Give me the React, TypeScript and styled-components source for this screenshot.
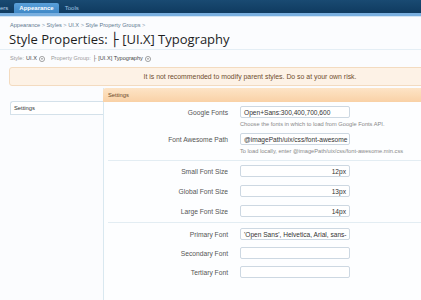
import React from 'react'
import styled, { createGlobalStyle } from 'styled-components'

const GlobalStyle = createGlobalStyle`
	html, body {
		margin: 0;
		padding: 0;
		background: #fbfcfe;
		overflow: hidden;
	}
	body {
		font-family: 'Liberation Sans', Arial, sans-serif;
		color: #333;
	}
`

const DropIcon: React.FC = () => (
	<svg width="6" height="6" viewBox="0 0 10 10" style={{ marginLeft: 2, verticalAlign: '-1px' }}>
		<circle cx="5" cy="5" r="4.3" fill="none" stroke="#777" strokeWidth="1.1" />
		<path d="M3 4 L5 6.4 L7 4 Z" fill="#666" />
	</svg>
)

const groups = [
	{
		rows: [
			{ label: 'Google Fonts', value: 'Open+Sans:300,400,700,600', hint: 'Choose the fonts in which to load from Google Fonts API.' },
			{ label: 'Font Awesome Path', value: '@imagePath/uix/css/font-awesome', hint: 'To load locally, enter @imagePath/uix/css/font-awesome.min.css' },
		],
	},
	{
		rows: [
			{ label: 'Small Font Size', value: '12px', right: true },
			{ label: 'Global Font Size', value: '13px', right: true },
			{ label: 'Large Font Size', value: '14px', right: true },
		],
	},
	{
		rows: [
			{ label: 'Primary Font', value: "'Open Sans', Helvetica, Arial, sans-" },
			{ label: 'Secondary Font', value: '' },
			{ label: 'Tertiary Font', value: '' },
		],
	},
]

export default function App() {
	return (
		<Page>
			<GlobalStyle />
			<TopBar>
				<Tab>ers</Tab>
				<Tab $active>Appearance</Tab>
				<Tab>Tools</Tab>
			</TopBar>
			<SubStrip />

			<TitleBar>
				<Breadcrumb>
					Appearance <Crumb>&gt;</Crumb> Styles <Crumb>&gt;</Crumb> UI.X <Crumb>&gt;</Crumb> Style Property Groups <Crumb>&gt;</Crumb>
				</Breadcrumb>
				<Title>Style Properties: ├ [UI.X] Typography</Title>
			</TitleBar>

			<Body>
				<Chooser>
					<ChooserLabel>Style:</ChooserLabel> <ChooserValue>UI.X</ChooserValue>
					<DropIcon />
					<Spacer />
					<ChooserLabel>Property Group:</ChooserLabel> <ChooserValue>├ [UI.X] Typography</ChooserValue>
					<DropIcon />
				</Chooser>

				<Notice>It is not recommended to modify parent styles. Do so at your own risk.</Notice>

				<Columns>
					<Sidebar>
						<SideTab>Settings</SideTab>
					</Sidebar>
					<Main>
						<SectionHeader>Settings</SectionHeader>
						{groups.map((g, gi) => (
							<Group key={gi} $first={gi === 0} $kind={gi}>
								{g.rows.map((r) => (
									<Row key={r.label}>
										<Label>{r.label}</Label>
										<Field $right={'right' in r && !!r.right}>{r.value}</Field>
										{'hint' in r && r.hint && <Hint>{r.hint}</Hint>}
									</Row>
								))}
							</Group>
						))}
					</Main>
				</Columns>
			</Body>
		</Page>
	)
}

const Page = styled.div`
	width: 500px;
	min-height: 300px;
`

const TopBar = styled.div`
	height: 13px;
	background: linear-gradient(#194a72, #0f3b60);
	display: flex;
	align-items: flex-end;
	gap: 6px;
`

const Tab = styled.div<{ $active?: boolean }>`
	height: 10px;
	line-height: 10px;
	padding: 0 ${(p) => (p.$active ? '5px' : '0')};
	font-size: 6px;
	font-weight: ${(p) => (p.$active ? 'bold' : 'normal')};
	color: ${(p) => (p.$active ? '#ffffff' : '#9fc2e2')};
	background: ${(p) => (p.$active ? 'linear-gradient(#5aa0da, #3f88c6)' : 'transparent')};
	border-radius: 2px 2px 0 0;
	&:first-child {
		color: #b8d2ea;
	}
`

const SubStrip = styled.div`
	height: 3px;
	background: #79afdf;
	border-bottom: 1px solid #d4e6f5;
`

const TitleBar = styled.div`
	padding: 0 9px 1px;
	border-bottom: 1px solid #e4eef5;
`

const Breadcrumb = styled.div`
	margin-top: 4px;
	margin-left: 1px;
	font-size: 5.6px;
	line-height: 8px;
	color: #5f7a90;
`

const Crumb = styled.span`
	color: #8aa0b2;
`

const Title = styled.h1`
	margin: 2px 0 0;
	font-family: 'Open Sans', 'DejaVu Sans', sans-serif;
	font-weight: normal;
	font-size: 13px;
	line-height: 17px;
	color: #1e1e1e;
`

const Body = styled.div`
	padding: 0 9px;
`

const Chooser = styled.div`
	margin-top: 4px;
	margin-left: 1px;
	font-size: 5.6px;
	line-height: 9px;
	display: flex;
	align-items: center;
`

const ChooserLabel = styled.span`
	color: #999;
	margin-right: 2px;
`

const ChooserValue = styled.span`
	color: #444;
`

const Spacer = styled.span`
	width: 6px;
`

const Notice = styled.div`
	margin-top: 4px;
	height: 17px;
	line-height: 17px;
	background: #fdf2e6;
	border: 1px solid #f3dbc0;
	border-radius: 3px;
	text-align: center;
	font-size: 6.9px;
	color: #6e4d2e;
`

const Columns = styled.div`
	margin-top: 2px;
	display: flex;
	align-items: stretch;
	min-height: 220px;
`

const Sidebar = styled.div`
	width: 93px;
	padding-top: 13px;
	margin-left: 1px;
`

const SideTab = styled.div`
	height: 12px;
	line-height: 12px;
	padding-left: 3px;
	font-size: 5.8px;
	color: #333;
	background: #fff;
	border: 1px solid #d4e1ea;
	border-right: none;
	border-radius: 3px 0 0 0;
`

const Main = styled.div`
	flex: 1;
	border-left: 1px solid #d9e8f0;
	background: #fdfeff;
`

const SectionHeader = styled.div`
	height: 14px;
	line-height: 14px;
	margin-left: -1px;
	padding-left: 5px;
	font-size: 5.8px;
	color: #6a4626;
	background: linear-gradient(#fde4c6, #f9d1a6);
	border-radius: 3px 0 0 0;
`

const Group = styled.div<{ $first: boolean; $kind: number }>`
	margin-left: 4px;
	border-top: ${(p) => (p.$first ? 'none' : '1px solid #e3edf3')};
	padding: ${(p) => (p.$kind === 2 ? '5px 0 4px' : '4px 0 5px')};
	display: flex;
	flex-direction: column;
	gap: ${(p) => (p.$kind === 0 ? '5px' : p.$kind === 1 ? '8px' : '7px')};
`

const Row = styled.div`
	display: grid;
	grid-template-columns: 120px 110px;
	column-gap: 12px;
	align-items: center;
`

const Label = styled.div`
	text-align: right;
	font-size: 6.7px;
	color: #555;
	white-space: nowrap;
`

const Field = styled.div<{ $right: boolean }>`
	height: 12px;
	line-height: 12px;
	box-sizing: border-box;
	padding: 0 3px;
	background: #fff;
	border: 1px solid #cdd8e2;
	border-radius: 2px;
	font-size: 6.6px;
	color: #333;
	text-align: ${(p) => (p.$right ? 'right' : 'left')};
	white-space: nowrap;
	overflow: hidden;
`

const Hint = styled.div`
	grid-column: 2;
	margin-top: 2px;
	font-size: 5.7px;
	line-height: 8px;
	color: #888;
	white-space: nowrap;
`
